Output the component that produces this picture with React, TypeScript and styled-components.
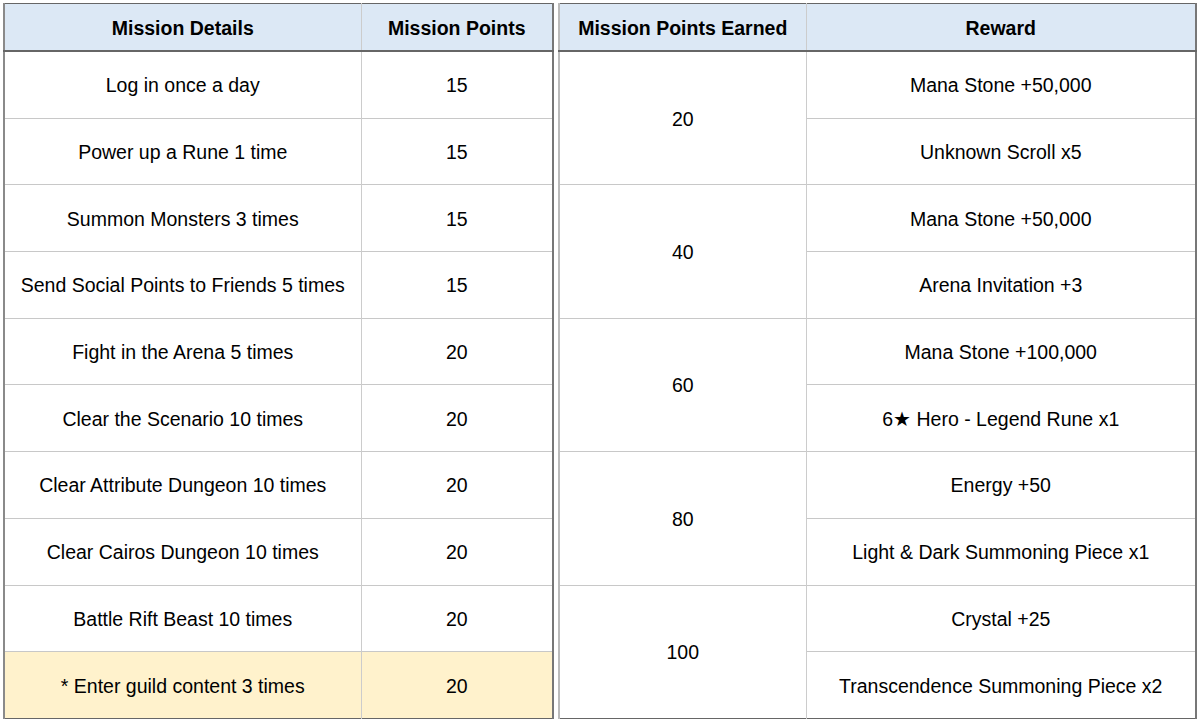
import React from "react";
import styled, { createGlobalStyle } from "styled-components";

const Global = createGlobalStyle`
  html, body { margin: 0; padding: 0; background: #ffffff; }
  body { font-family: "Liberation Sans", Arial, sans-serif; }
`;

const Page = styled.div`
  display: flex;
  gap: 4px;
  padding: 3px 3px 0 3px;
  align-items: flex-start;
`;

const Table = styled.table<{ $w: number; $leftColor: string }>`
  width: ${(p) => p.$w}px;
  table-layout: fixed;
  border-collapse: collapse;
  border-top: 1px solid #666666;
  border-bottom: 1px solid #666666;
  border-left: 2px solid ${(p) => p.$leftColor};
  border-right: 2px solid #777777;
  font-size: 19.5px;
  color: #000000;
`;

const Th = styled.th<{ $first?: boolean }>`
  background: #dce8f5;
  font-weight: 700;
  height: 44px;
  padding: 2px 4px 0 4px;
  text-align: center;
  vertical-align: middle;
  border-bottom: 2px solid #666666;
  border-left: ${(p) => (p.$first ? "none" : "1px solid #cccccc")};
`;

const Td = styled.td<{ $hl?: boolean; $first?: boolean }>`
  background: ${(p) => (p.$hl ? "#fff2cc" : "#ffffff")};
  height: 63.7px;
  padding: 2px 4px 0 4px;
  text-align: center;
  vertical-align: middle;
  border-top: 1px solid #c8c8c8;
  border-left: ${(p) => (p.$first ? "none" : "1px solid #cccccc")};
  white-space: nowrap;
`;

const missions: [string, number][] = [
  ["Log in once a day", 15],
  ["Power up a Rune 1 time", 15],
  ["Summon Monsters 3 times", 15],
  ["Send Social Points to Friends 5 times", 15],
  ["Fight in the Arena 5 times", 20],
  ["Clear the Scenario 10 times", 20],
  ["Clear Attribute Dungeon 10 times", 20],
  ["Clear Cairos Dungeon 10 times", 20],
  ["Battle Rift Beast 10 times", 20],
  ["* Enter guild content 3 times", 20],
];

const rewards: [number, string, string][] = [
  [20, "Mana Stone +50,000", "Unknown Scroll x5"],
  [40, "Mana Stone +50,000", "Arena Invitation +3"],
  [60, "Mana Stone +100,000", "6★ Hero - Legend Rune x1"],
  [80, "Energy +50", "Light & Dark Summoning Piece x1"],
  [100, "Crystal +25", "Transcendence Summoning Piece x2"],
];

export default function App() {
  return (
    <>
      <Global />
      <Page>
        <Table $w={551} $leftColor="#8a8a8a">
          <colgroup>
            <col style={{ width: 357 }} />
            <col style={{ width: 192 }} />
          </colgroup>
          <thead>
            <tr>
              <Th $first>Mission Details</Th>
              <Th>Mission Points</Th>
            </tr>
          </thead>
          <tbody>
            {missions.map(([m, p], i) => {
              const hl = i === missions.length - 1;
              return (
                <tr key={m}>
                  <Td $hl={hl} $first>
                    {m}
                  </Td>
                  <Td $hl={hl}>{p}</Td>
                </tr>
              );
            })}
          </tbody>
        </Table>
        <Table $w={639} $leftColor="#bbbbbb">
          <colgroup>
            <col style={{ width: 247 }} />
            <col style={{ width: 390 }} />
          </colgroup>
          <thead>
            <tr>
              <Th $first>Mission Points Earned</Th>
              <Th>Reward</Th>
            </tr>
          </thead>
          <tbody>
            {rewards.map(([pts, a, b]) => (
              <React.Fragment key={pts}>
                <tr>
                  <Td rowSpan={2} $first>
                    {pts}
                  </Td>
                  <Td>{a}</Td>
                </tr>
                <tr>
                  <Td>{b}</Td>
                </tr>
              </React.Fragment>
            ))}
          </tbody>
        </Table>
      </Page>
    </>
  );
}
